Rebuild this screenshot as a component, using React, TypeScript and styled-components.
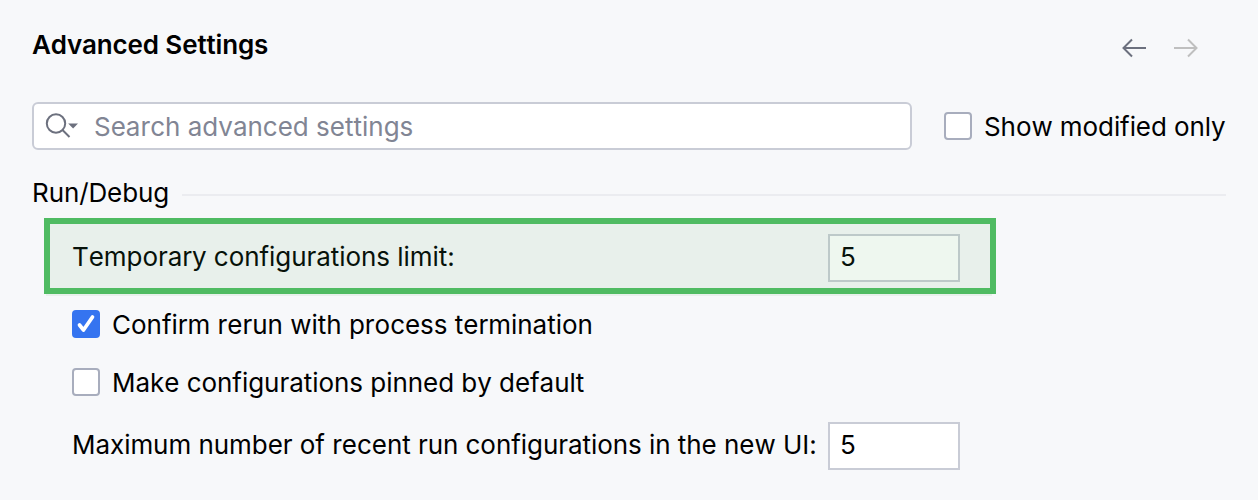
import React from 'react';
import styled, { createGlobalStyle } from 'styled-components';

const Global = createGlobalStyle`
  body { margin: 0; background: #f7f8fa; }
  * { box-sizing: border-box; }
`;
const Page = styled.main`
  width: 1258px; height: 500px; padding: 28px 32px 0; overflow: hidden;
  background: #f7f8fa; color: #000; font: 26px/32px Inter, sans-serif;
  font-kerning: none; font-variant-ligatures: none; font-feature-settings: "calt" 0;
`;
const Header = styled.header`
  display: flex; justify-content: space-between; height: 74px;
`;
const Title = styled.h1`
  margin: 0; font-size: 26px; line-height: 34px; font-weight: 600; white-space: nowrap; letter-spacing: -0.13px;
`;
const Nav = styled.nav`
  display: flex; gap: 24px; padding: 8px 26px 0 0;
`;
const Filters = styled.div`
  display: flex; align-items: center; height: 48px;
`;
const Search = styled.div`
  flex: none; width: 880px; height: 48px; margin-right: 32px; border: 2px solid #c9ccd6; border-radius: 6px;
  background: #fff; color: #818594; display: flex; align-items: center; padding-left: 10px; gap: 14px;
`;
const Label = styled.span<{ $drop?: number; $track?: number }>`
  display: block; white-space: nowrap; padding-top: ${p => p.$drop ?? 0}px; letter-spacing: ${p => p.$track ?? 0}px;
`;
const Section = styled.div`
  display: flex; align-items: center; height: 32px; margin-top: 27px;
`;
const SectionName = styled.h2`
  margin: 0; width: 150px; font-size: 26px; line-height: 32px; font-weight: 400; letter-spacing: -0.1px;
`;
const Rule = styled.div`
  flex: 1; height: 2px; margin: 4px 0 0; background: #ebecf0;
`;
const Highlight = styled.div`
  width: 952px; height: 76px; margin: 9px 0 0 12px; border: 6px solid #4fbb62; background: #e8f0eb;
  color: #07120a; box-shadow: -1px 5px 0 -3px #e8f0eb;
  display: flex; align-items: center; justify-content: space-between; padding: 4px 30px 0 22px;
`;
const NumberField = styled.div<{ $tinted?: boolean }>`
  width: 132px; height: 48px; border: 2px solid ${p => p.$tinted ? '#bdc9c9' : '#c9ccd6'};
  background: ${p => p.$tinted ? '#eef7ef' : '#fff'}; padding: 5px 10px;
`;
const Option = styled.label`
  display: flex; align-items: center; gap: 12px; height: 30px; white-space: nowrap;
`;
const Options = styled.div`
  display: flex; flex-direction: column; gap: 28px; margin: 15px 0 0 40px;
`;
const Box = styled.span<{ $on?: boolean }>`
  width: 28px; height: 28px; flex: none; border-radius: 4px; display: block;
  border: ${p => p.$on ? '0' : '2px solid #a8adbd'}; background: ${p => p.$on ? '#3574f0' : '#fff'};
`;
const LimitRow = styled.div`
  display: flex; align-items: center; justify-content: space-between; width: 888px; height: 48px; margin: 25px 0 0 40px;
`;
const RowLabel = styled(Label)`
  padding-bottom: 2px;
`;
const Arrow = ({ color, flip }: { color: string; flip?: boolean }) => (
  <svg width="28" height="24" viewBox="0 0 28 24" fill="none" stroke={color} strokeWidth="2">
    <path d={flip ? 'M2 12H25M16 3.5L24.5 12L16 20.5' : 'M26 12H3M12 3.5L3.5 12L12 20.5'} />
  </svg>
);

export default function App() {
  return (
    <Page>
      <Global />
      <Header>
        <Title>Advanced Settings</Title>
        <Nav><Arrow color="#6c707e" /><Arrow color="#bfbfbf" flip /></Nav>
      </Header>
      <Filters>
        <Search>
          <svg width="36" height="28" viewBox="0 0 36 28" fill="none" stroke="#6c707e" strokeWidth="2">
            <circle cx="12" cy="11.5" r="9.2" /><path d="M18.5 18L25.5 25" /><path d="M24.2 11.5H34L29.1 16.5Z" fill="#6c707e" stroke="none" />
          </svg>
          <Label $drop={2}>Search advanced settings</Label>
        </Search>
        <Option><Box /><Label $drop={2} $track={-0.08}>Show modified only</Label></Option>
      </Filters>
      <Section><SectionName>Run/Debug</SectionName><Rule /></Section>
      <Highlight><RowLabel $track={-0.05}>Temporary configurations limit:</RowLabel><NumberField $tinted>5</NumberField></Highlight>
      <Options>
        <Option>
          <Box $on>
            <svg width="28" height="28" viewBox="0 0 28 28" fill="none" stroke="#fff" strokeWidth="3.7" strokeLinecap="round" strokeLinejoin="round">
              <path d="M7.5 15L11.5 20L20.5 7" />
            </svg>
          </Box>
          <Label $drop={2} $track={-0.02}>Confirm rerun with process termination</Label>
        </Option>
        <Option><Box /><Label $drop={2} $track={-0.04}>Make configurations pinned by default</Label></Option>
      </Options>
      <LimitRow><RowLabel $track={-0.05}>Maximum number of recent run configurations in the new UI:</RowLabel><NumberField>5</NumberField></LimitRow>
    </Page>
  );
}
